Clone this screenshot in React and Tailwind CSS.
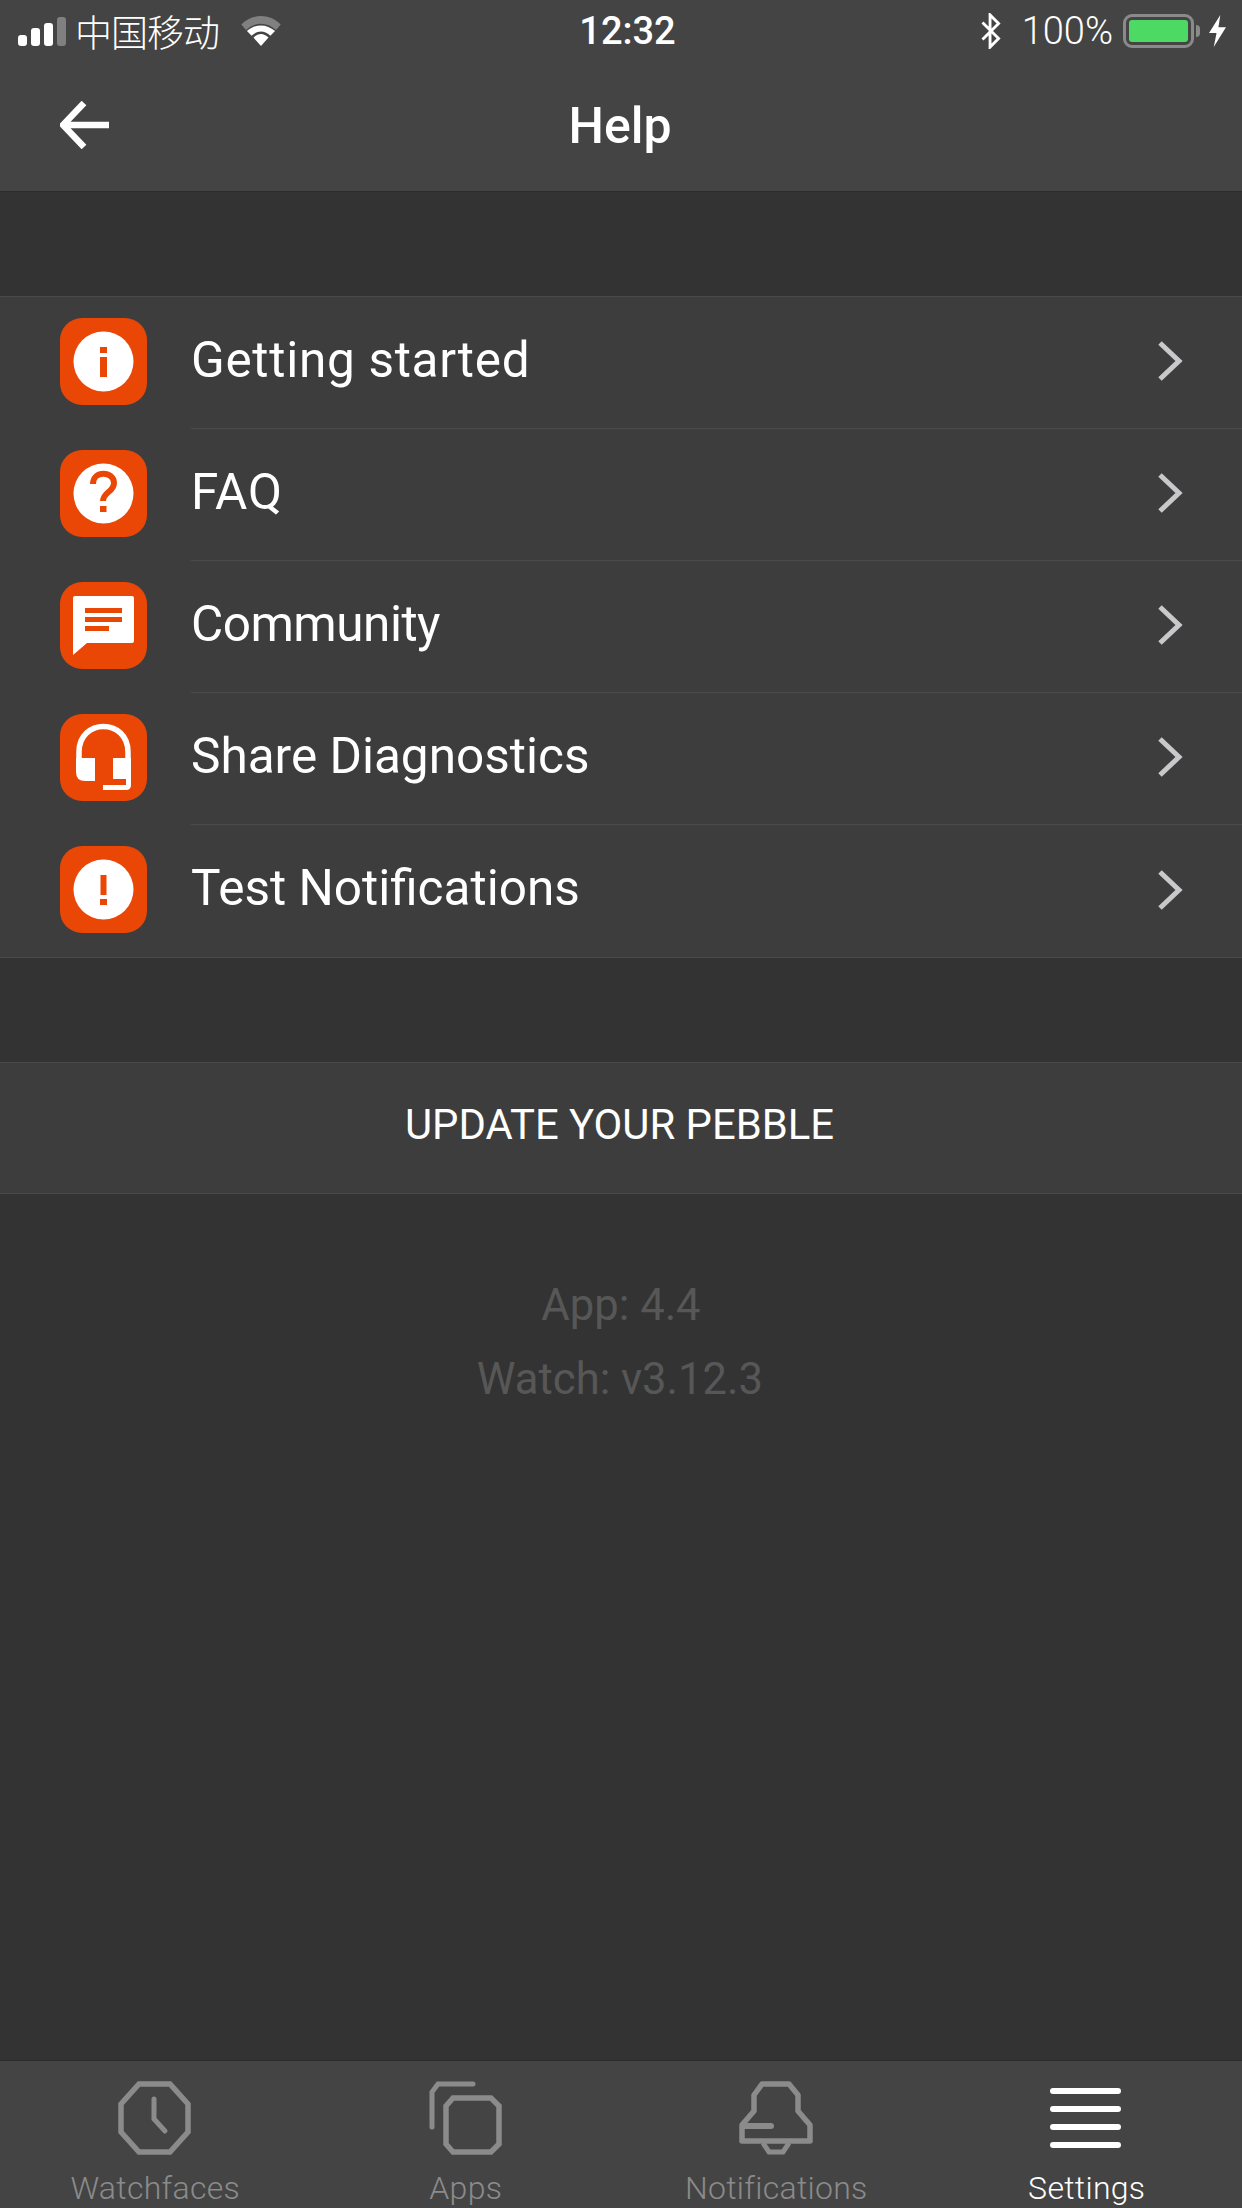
import React from 'react';

const menu = [
  { label: 'Getting started', icon: 'info', track: 'tracking-[0.7px]' },
  { label: 'FAQ', icon: 'faq', track: 'tracking-[0.8px]' },
  { label: 'Community', icon: 'chat', track: 'tracking-[-0.5px]' },
  { label: 'Share Diagnostics', icon: 'headset', track: 'tracking-normal' },
  { label: 'Test Notifications', icon: 'alert', track: 'tracking-normal' },
];

const ORANGE = '#ea4707';

const MenuIcon = ({ type }) => (
  <div className="w-[87px] h-[87px] rounded-[22px] bg-[#ea4707] shrink-0 mb-[3px]">
    <svg viewBox="0 0 87 87" className="w-full h-full">
      {type === 'info' && (
        <>
          <circle cx="43.5" cy="43.5" r="30" fill="#fff" />
          <rect x="40" y="29" width="7" height="6" fill={ORANGE} />
          <rect x="40" y="39" width="7" height="20" fill={ORANGE} />
        </>
      )}
      {type === 'faq' && (
        <>
          <circle cx="43.5" cy="43.5" r="30" fill="#fff" />
          <path d="M33 34 C33 20 54 21 54 33 C54 42 43 42 43 51" fill="none" stroke={ORANGE} strokeWidth="6" />
          <rect x="40" y="56" width="6.5" height="6" fill={ORANGE} />
        </>
      )}
      {type === 'chat' && (
        <>
          <path d="M15 14 H72 Q74 14 74 16 V59 Q74 61 72 61 H27 L13 73 V16 Q13 14 15 14 Z" fill="#fff" />
          <rect x="25" y="26" width="37" height="5" fill={ORANGE} />
          <rect x="25" y="35" width="37" height="5" fill={ORANGE} />
          <rect x="25" y="44" width="24" height="5" fill={ORANGE} />
        </>
      )}
      {type === 'headset' && (
        <>
          <path d="M19 46 V38 C19 4 68 4 68 38 V46" fill="none" stroke="#fff" strokeWidth="5.5" />
          <path d="M16 44 H35 V67 H25 Q16 67 16 58 Z" fill="#fff" />
          <path d="M53 44 H71 V65 H53 Z" fill="#fff" />
          <path d="M43 73.5 H66 Q68.5 73.5 68.5 71 V64" fill="none" stroke="#fff" strokeWidth="5" />
          <rect x="53" y="65" width="13" height="6" fill={ORANGE} />
        </>
      )}
      {type === 'alert' && (
        <>
          <circle cx="43.5" cy="43.5" r="30" fill="#fff" />
          <rect x="40.5" y="29" width="6" height="20" fill={ORANGE} />
          <rect x="40" y="53" width="7" height="6" fill={ORANGE} />
        </>
      )}
    </svg>
  </div>
);

const Chevron = () => (
  <svg width="28" height="42" viewBox="0 0 28 42" className="shrink-0 mb-[3px]">
    <path d="M4 3 L23 21 L4 39" fill="none" stroke="#c9c9cc" strokeWidth="5" />
  </svg>
);

const MenuRow = ({ item, last }) => (
  <div className="flex items-center h-[132px]">
    <div className="pl-[60px] pr-[44px]">
      <MenuIcon type={item.icon} />
    </div>
    <div className={`flex-1 h-full flex items-center justify-between pr-[58px] ${last ? '' : 'border-b border-[#4b4b4b]'}`}>
      <span className={`text-[49.5px] text-white leading-none pb-[4px] ${item.track}`}>{item.label}</span>
      <Chevron />
    </div>
  </div>
);

const StatusBar = () => (
  <div className="h-[62px] grid grid-cols-[1fr_auto_1fr] items-center pl-[18px] pr-[15px] text-white">
    <div className="flex items-center">
      <div className="flex items-end gap-[4px] h-[29px]">
        <div className="w-[9px] h-[11px] rounded-[3px] bg-white" />
        <div className="w-[9px] h-[18px] rounded-[3px] bg-white" />
        <div className="w-[9px] h-[23px] rounded-[3px] bg-white" />
        <div className="w-[9px] h-[29px] rounded-[3px] bg-[#808080]" />
      </div>
      <span className="ml-[9px] text-[37px] leading-none font-light tracking-[-1px]" style={{ fontFamily: '"Noto Sans CJK SC", sans-serif' }}>中国移动</span>
      <svg width="44" height="30" viewBox="0 0 42 32" className="ml-[20px]">
        <path d="M0 9 C12 -3 30 -3 42 9 L37 15 C27 6 15 6 5 15 Z" fill="#808080" />
        <path d="M6 16 C15 8 27 8 36 16 L31 21 C24 15 18 15 11 21 Z" fill="#fff" />
        <path d="M13 23 C18 18 24 18 29 23 L21 32 Z" fill="#fff" />
      </svg>
    </div>
    <span className="ml-[10px] text-[38px] leading-[42px] font-medium">12:32</span>
    <div className="flex items-center justify-end">
      <svg width="24" height="36" viewBox="0 0 22 38" className="mr-[19px]">
        <path d="M2 10 L19 27 L10 36 V2 L19 11 L2 28" fill="none" stroke="#fff" strokeWidth="3" />
      </svg>
      <span className="text-[38px] leading-none font-light">100%</span>
      <div className="ml-[10px] w-[71px] h-[34px] rounded-[9px] border-[3px] border-[#8a8a8a] p-[3px]">
        <div className="w-full h-full rounded-[3px] bg-[#4cd964]" />
      </div>
      <div className="ml-[2px] w-[4px] h-[12px] rounded-r-full bg-[#8a8a8a]" />
      <svg width="19" height="32" viewBox="0 0 18 34" className="ml-[8px]">
        <path d="M12 0 L0 19 H8 L5 34 L18 13 H10 Z" fill="#fff" />
      </svg>
    </div>
  </div>
);

const TabIcon = ({ type }) => {
  const c = '#8b8b8b';
  return (
    <svg width="74" height="74" viewBox="0 0 74 74">
      {type === 'clock' && (
        <>
          <path d="M21 3 H52 L70 23 V51 L52 71 H21 L3 51 V23 Z" fill="none" stroke={c} strokeWidth="5.5" />
          <path d="M36 18 V38 L47 50" fill="none" stroke={c} strokeWidth="5" strokeLinecap="round" />
        </>
      )}
      {type === 'apps' && (
        <>
          <path d="M3 46 V11 L9 3 H44" fill="none" stroke={c} strokeWidth="5" strokeLinecap="round" />
          <path d="M24 17 H62 L70 25 V63 L62 71 H24 L17 63 V25 Z" fill="none" stroke={c} strokeWidth="5.5" />
        </>
      )}
      {type === 'bell' && (
        <>
          <path d="M23 3 H50 L59 14 V30 L71 44 V60 H3 V44 L15 30 V14 Z" fill="none" stroke={c} strokeWidth="5.5" strokeLinejoin="round" />
          <path d="M4 45 H32" fill="none" stroke={c} strokeWidth="6" strokeLinecap="round" />
          <path d="M24 62 L30 71 H44 L50 62" fill="none" stroke={c} strokeWidth="5" />
        </>
      )}
      {type === 'menu' && (
        <path d="M3 10 H68 M3 28 H68 M3 46 H68 M3 64 H68" fill="none" stroke="#fff" strokeWidth="6" strokeLinecap="round" />
      )}
    </svg>
  );
};

const tabs = [
  { label: 'Watchfaces', icon: 'clock' },
  { label: 'Apps', icon: 'apps' },
  { label: 'Notifications', icon: 'bell' },
  { label: 'Settings', icon: 'menu', active: true },
];

const App = () => {
  return (
    <div className="w-[1242px] h-[2208px] flex flex-col bg-[#333333] overflow-hidden" style={{ fontFamily: 'Roboto, sans-serif' }}>
      {/* Header */}
      <div className="h-[192px] bg-[#444444] border-b border-[#2c2c2c] shrink-0">
        <StatusBar />
        <div className="relative h-[129px] flex items-center justify-center">
          <svg width="50" height="48" viewBox="0 0 50 48" className="absolute left-[60px] top-[39px]">
            <path d="M49 24 H4 M24 2 L3 24 L24 46" fill="none" stroke="#fff" strokeWidth="6.5" />
          </svg>
          <span className="text-[50px] font-medium text-white leading-none -mt-[2px] -ml-[2px]">Help</span>
        </div>
      </div>

      {/* Menu list */}
      <div className="mt-[104px] bg-[#3d3d3d] border-y border-[#4a4a4a] shrink-0">
        {menu.map((item, i) => (
          <MenuRow key={item.label} item={item} last={i === menu.length - 1} />
        ))}
      </div>

      <div className="mt-[104px] h-[132px] bg-[#3d3d3d] border-y border-[#4a4a4a] flex items-center justify-center shrink-0">
        <span className="text-[41.8px] text-white leading-none pb-[6px] -ml-[3px]">UPDATE YOUR PEBBLE</span>
      </div>

      {/* Versions */}
      <div className="flex flex-col items-center pt-[75px] text-[43.6px] leading-[74px] text-[#575757]">
        <span>App: 4.4</span>
        <span className="-ml-[2px]">Watch: v3.12.3</span>
      </div>

      {/* Tab bar */}
      <div className="mt-auto h-[148px] bg-[#444444] border-t border-[#2c2c2c] grid grid-cols-4 shrink-0">
        {tabs.map((t) => (
          <div key={t.label} className="flex flex-col items-center pt-[20px]">
            <TabIcon type={t.icon} />
            <span className={`mt-[15px] text-[32px] leading-[36px] tracking-[0.3px] font-light ${t.active ? 'text-white' : 'text-[#8b8b8b]'}`}>{t.label}</span>
          </div>
        ))}
      </div>
    </div>
  );
};

export default App;
